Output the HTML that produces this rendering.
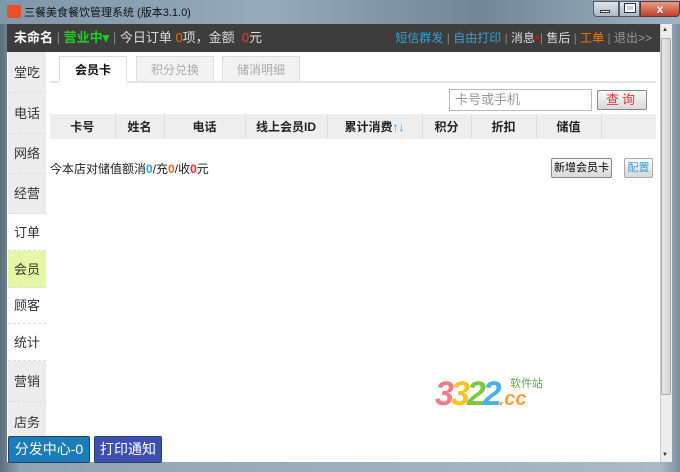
<!DOCTYPE html>
<html><head><meta charset="utf-8"><style>
*{margin:0;padding:0;box-sizing:border-box}
body{width:680px;height:472px;overflow:hidden;font-family:"Liberation Sans","Noto Sans CJK SC",sans-serif;font-size:12px;background:#6f8494;position:relative}
.abs{position:absolute}
#title{left:0;top:0;width:680px;height:24px;background:linear-gradient(90deg,#7f97aa,#95aabb 40%,#6f8798 70%,#a0b2c0);}
#frame{left:0;top:24px;width:680px;height:448px;background:linear-gradient(90deg,#5d6e7b,#8fa3b2 3%,#a9bac6 97%,#7e90a0)}
#bar{left:7px;top:24px;width:653px;height:28px;background:#3d3d3d;color:#ddd;font-size:13px;line-height:28px}
#main{left:7px;top:52px;width:653px;height:410px;background:#fff}
.side div{position:absolute;left:0;width:38px;text-align:center;font-size:13px;color:#333;border-bottom:1px dashed #ddd}
.tab{position:absolute;top:56px;height:26px;border:1px solid #ddd;border-bottom:none;background:#f2f2f2;color:#aaa;text-align:center;line-height:26px;font-size:12px}
th{background:#eee;font-weight:bold;font-size:12px;color:#222;border-right:1px solid #ddd;height:25px}
.btn{position:absolute;border:1px solid #888;border-radius:2px;background:linear-gradient(#fafafa,#d8d8d8);text-align:center;font-size:11px}
</style></head><body>
<div id="frame" class="abs"></div>
<div id="title" class="abs">
 <div class="abs" style="left:7px;top:5px;width:14px;height:13px;background:#e8502a;border-radius:2px"></div>
 <div class="abs" style="left:24px;top:4px;font-size:11px;color:#111">三餐美食餐饮管理系统 (版本3.1.0)</div>
 <div class="abs" style="left:593px;top:1px;width:26px;height:16px;border:1px solid #556;border-radius:0 0 0 4px;background:linear-gradient(#dde6ee,#aab8c6)"></div>
 <div class="abs" style="left:600px;top:10px;width:10px;height:3px;background:#fff;border:1px solid #333"></div>
 <div class="abs" style="left:619px;top:1px;width:21px;height:16px;border:1px solid #556;background:linear-gradient(#dde6ee,#aab8c6)"></div>
 <div class="abs" style="left:625px;top:4px;width:10px;height:8px;border:2px solid #fff;outline:1px solid #333"></div>
 <div class="abs" style="left:640px;top:1px;width:40px;height:16px;border:1px solid #633;border-radius:0 0 4px 0;background:linear-gradient(#e89a88,#c0402a);color:#fff;font-weight:bold;text-align:center;line-height:14px">x</div>
</div>
<div id="bar" class="abs">
 <span style="position:absolute;left:7px"><b style="color:#fff">未命名</b> <span style="color:#888">|</span> <b style="color:#2c2">营业中▾</b> <span style="color:#888">|</span> 今日订单 <span style="color:#f60">0</span>项，金额 &nbsp;<span style="color:#f33">0</span>元</span>
 <span style="position:absolute;right:8px;font-size:12px"><span style="color:#3a9fd8">短信群发</span> <span style="color:#888">|</span> <span style="color:#3a9fd8">自由打印</span> <span style="color:#888">|</span> 消息<span style="color:#f00;font-size:8px;vertical-align:top">●</span><span style="color:#888">|</span> 售后 <span style="color:#888">|</span> <span style="color:#f70">工单</span> <span style="color:#888">|</span> <span style="color:#999">退出&gt;&gt;</span></span>
</div>
<div id="main" class="abs"></div>
<div class="abs side" style="left:8px;top:52px">
 <div style="top:0;height:41px;line-height:41px;background:#ececec">堂吃</div>
 <div style="top:41px;height:41px;line-height:41px;background:#ececec">电话</div>
 <div style="top:82px;height:40px;line-height:40px;background:#ececec">网络</div>
 <div style="top:122px;height:40px;line-height:40px;background:#ececec">经营</div>
 <div style="top:162px;height:37px;line-height:37px;background:#fff">订单</div>
 <div style="top:199px;height:37px;line-height:37px;background:#e3f7a6">会员</div>
 <div style="top:236px;height:36px;line-height:36px;background:#fff">顾客</div>
 <div style="top:272px;height:37px;line-height:37px;background:#fff">统计</div>
 <div style="top:309px;height:41px;line-height:41px;background:#ececec">营销</div>
 <div style="top:350px;height:41px;line-height:41px;background:#ececec">店务</div>
</div>
<div class="tab" style="left:59px;width:68px;background:#fff;color:#111;font-weight:bold;height:27px">会员卡</div>
<div class="tab" style="left:136px;width:78px">积分兑换</div>
<div class="tab" style="left:222px;width:78px">储消明细</div>
<div class="abs" style="left:50px;top:81px;width:606px;height:2px;background:#e4e4e4"></div>
<div class="abs" style="left:59px;top:81px;width:68px;height:2px;background:#fff"></div>
<div class="abs" style="left:449px;top:89px;width:143px;height:22px;border:1px solid #bbb;color:#999;font-size:13px;line-height:20px;padding-left:5px">卡号或手机</div>
<div class="btn" style="left:597px;top:90px;width:50px;height:20px;color:#e33;font-size:13px;line-height:18px;letter-spacing:3px">查询</div>
<table class="abs" style="left:50px;top:114px;width:606px;border-collapse:collapse">
<tr><th style="width:65px">卡号</th><th style="width:49px">姓名</th><th style="width:81px">电话</th><th style="width:82px">线上会员ID</th><th style="width:95px">累计消费<span style="color:#4a90c8;font-weight:normal">↑↓</span></th><th style="width:49px">积分</th><th style="width:65px">折扣</th><th style="width:65px">储值</th><th style="border-right:none"></th></tr>
</table>
<div class="abs" style="left:50px;top:160px;font-size:12px;color:#222">今本店对储值额消<b style="color:#2a9ee0">0</b>/充<b style="color:#f60">0</b>/收<b style="color:#e22">0</b>元</div>
<div class="btn" style="left:551px;top:158px;width:61px;height:20px;line-height:18px">新增会员卡</div>
<div class="btn" style="left:624px;top:158px;width:29px;height:20px;line-height:18px;color:#3a9fd8;border-color:#aaa">配置</div>
<div class="abs" style="left:435px;top:376px;font-size:34px;font-weight:bold;font-style:italic;letter-spacing:-3px;line-height:36px"><span style="color:#f07a8a">3</span><span style="color:#f8c420">3</span><span style="color:#7cc640">2</span><span style="color:#4ab0e8">2</span><span style="color:#f7a040;font-size:20px;letter-spacing:0">.cc</span></div>
<div class="abs" style="left:510px;top:375px;font-size:11px;color:#5aa83a">软件站</div>
<div class="abs" style="left:8px;top:436px;width:82px;height:27px;background:#1a7cb8;border:1px solid #246;border-radius:2px;color:#fff;font-size:14px;text-align:center;line-height:25px">分发中心-0</div>
<div class="abs" style="left:94px;top:436px;width:68px;height:27px;background:#3f4fb0;border:1px solid #246;border-radius:2px;color:#fff;font-size:14px;text-align:center;line-height:25px">打印通知</div>
<div class="abs" style="left:660px;top:24px;width:12px;height:438px;background:#ededed;border-left:1px solid #ccc"></div>
<div class="abs" style="left:661px;top:38px;width:10px;height:357px;background:linear-gradient(90deg,#e8e8e8,#d4d4d4);border:1px solid #aaa;border-radius:2px"></div>
<div class="abs" style="left:662px;top:27px;font-size:6px;color:#333">▲</div>
<div class="abs" style="left:662px;top:452px;font-size:6px;color:#333">▼</div>
</body></html>
